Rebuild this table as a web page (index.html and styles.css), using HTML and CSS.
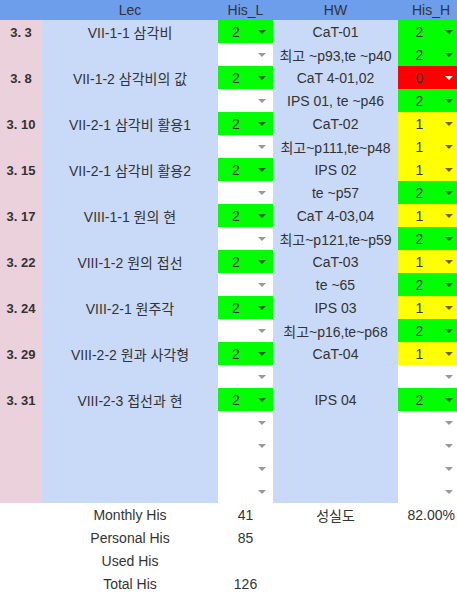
FILE: index.html
```html
<!DOCTYPE html>
<html lang="ko">
<head>
  <meta charset="UTF-8">
  <title>His 시트</title>
  <link rel="stylesheet" href="styles.css">
</head>
<body>
  <div class="sheet">
    <div class="row head">
      <div class="cell"></div>
      <div class="cell">Lec</div>
      <div class="cell">His_L</div>
      <div class="cell">HW</div>
      <div class="cell his-h-title">His_H</div>
    </div>

    <!-- 3.3 -->
    <div class="row">
      <div class="cell date">3. 3</div>
      <div class="cell lec">VII-1-1 삼각비</div>
      <div class="cell dd green"><span class="v">2</span><span class="arrow"></span></div>
      <div class="cell hw">CaT-01</div>
      <div class="cell dd hh green"><span class="v">2</span><span class="arrow"></span></div>
    </div>
    <div class="row">
      <div class="cell date"></div>
      <div class="cell lec"></div>
      <div class="cell dd"><span class="v"></span><span class="arrow"></span></div>
      <div class="cell hw">최고 ~p93,te ~p40</div>
      <div class="cell dd hh green"><span class="v">2</span><span class="arrow"></span></div>
    </div>

    <!-- 3.8 -->
    <div class="row">
      <div class="cell date">3. 8</div>
      <div class="cell lec">VII-1-2 삼각비의 값</div>
      <div class="cell dd green"><span class="v">2</span><span class="arrow"></span></div>
      <div class="cell hw">CaT 4-01,02</div>
      <div class="cell dd hh red"><span class="v">0</span><span class="arrow"></span></div>
    </div>
    <div class="row">
      <div class="cell date"></div>
      <div class="cell lec"></div>
      <div class="cell dd"><span class="v"></span><span class="arrow"></span></div>
      <div class="cell hw">IPS 01, te ~p46</div>
      <div class="cell dd hh green"><span class="v">2</span><span class="arrow"></span></div>
    </div>

    <!-- 3.10 -->
    <div class="row">
      <div class="cell date">3. 10</div>
      <div class="cell lec">VII-2-1 삼각비 활용1</div>
      <div class="cell dd green"><span class="v">2</span><span class="arrow"></span></div>
      <div class="cell hw">CaT-02</div>
      <div class="cell dd hh yellow"><span class="v">1</span><span class="arrow"></span></div>
    </div>
    <div class="row">
      <div class="cell date"></div>
      <div class="cell lec"></div>
      <div class="cell dd"><span class="v"></span><span class="arrow"></span></div>
      <div class="cell hw">최고~p111,te~p48</div>
      <div class="cell dd hh yellow"><span class="v">1</span><span class="arrow"></span></div>
    </div>

    <!-- 3.15 -->
    <div class="row">
      <div class="cell date">3. 15</div>
      <div class="cell lec">VII-2-1 삼각비 활용2</div>
      <div class="cell dd green"><span class="v">2</span><span class="arrow"></span></div>
      <div class="cell hw">IPS 02</div>
      <div class="cell dd hh yellow"><span class="v">1</span><span class="arrow"></span></div>
    </div>
    <div class="row">
      <div class="cell date"></div>
      <div class="cell lec"></div>
      <div class="cell dd"><span class="v"></span><span class="arrow"></span></div>
      <div class="cell hw">te ~p57</div>
      <div class="cell dd hh green"><span class="v">2</span><span class="arrow"></span></div>
    </div>

    <!-- 3.17 -->
    <div class="row">
      <div class="cell date">3. 17</div>
      <div class="cell lec">VIII-1-1 원의 현</div>
      <div class="cell dd green"><span class="v">2</span><span class="arrow"></span></div>
      <div class="cell hw">CaT 4-03,04</div>
      <div class="cell dd hh yellow"><span class="v">1</span><span class="arrow"></span></div>
    </div>
    <div class="row">
      <div class="cell date"></div>
      <div class="cell lec"></div>
      <div class="cell dd"><span class="v"></span><span class="arrow"></span></div>
      <div class="cell hw">최고~p121,te~p59</div>
      <div class="cell dd hh green"><span class="v">2</span><span class="arrow"></span></div>
    </div>

    <!-- 3.22 -->
    <div class="row">
      <div class="cell date">3. 22</div>
      <div class="cell lec">VIII-1-2 원의 접선</div>
      <div class="cell dd green"><span class="v">2</span><span class="arrow"></span></div>
      <div class="cell hw">CaT-03</div>
      <div class="cell dd hh yellow"><span class="v">1</span><span class="arrow"></span></div>
    </div>
    <div class="row">
      <div class="cell date"></div>
      <div class="cell lec"></div>
      <div class="cell dd"><span class="v"></span><span class="arrow"></span></div>
      <div class="cell hw">te ~65</div>
      <div class="cell dd hh green"><span class="v">2</span><span class="arrow"></span></div>
    </div>

    <!-- 3.24 -->
    <div class="row">
      <div class="cell date">3. 24</div>
      <div class="cell lec">VIII-2-1 원주각</div>
      <div class="cell dd green"><span class="v">2</span><span class="arrow"></span></div>
      <div class="cell hw">IPS 03</div>
      <div class="cell dd hh yellow"><span class="v">1</span><span class="arrow"></span></div>
    </div>
    <div class="row">
      <div class="cell date"></div>
      <div class="cell lec"></div>
      <div class="cell dd"><span class="v"></span><span class="arrow"></span></div>
      <div class="cell hw">최고~p16,te~p68</div>
      <div class="cell dd hh green"><span class="v">2</span><span class="arrow"></span></div>
    </div>

    <!-- 3.29 -->
    <div class="row">
      <div class="cell date">3. 29</div>
      <div class="cell lec">VIII-2-2 원과 사각형</div>
      <div class="cell dd green"><span class="v">2</span><span class="arrow"></span></div>
      <div class="cell hw">CaT-04</div>
      <div class="cell dd hh yellow"><span class="v">1</span><span class="arrow"></span></div>
    </div>
    <div class="row">
      <div class="cell date"></div>
      <div class="cell lec"></div>
      <div class="cell dd"><span class="v"></span><span class="arrow"></span></div>
      <div class="cell hw"></div>
      <div class="cell dd hh"><span class="v"></span><span class="arrow"></span></div>
    </div>

    <!-- 3.31 -->
    <div class="row">
      <div class="cell date">3. 31</div>
      <div class="cell lec">VIII-2-3 접선과 현</div>
      <div class="cell dd green"><span class="v">2</span><span class="arrow"></span></div>
      <div class="cell hw">IPS 04</div>
      <div class="cell dd hh green"><span class="v">2</span><span class="arrow"></span></div>
    </div>

    <!-- 빈 행 -->
    <div class="row">
      <div class="cell date"></div>
      <div class="cell lec"></div>
      <div class="cell dd"><span class="v"></span><span class="arrow"></span></div>
      <div class="cell hw"></div>
      <div class="cell dd hh"><span class="v"></span><span class="arrow"></span></div>
    </div>
    <div class="row">
      <div class="cell date"></div>
      <div class="cell lec"></div>
      <div class="cell dd"><span class="v"></span><span class="arrow"></span></div>
      <div class="cell hw"></div>
      <div class="cell dd hh"><span class="v"></span><span class="arrow"></span></div>
    </div>
    <div class="row">
      <div class="cell date"></div>
      <div class="cell lec"></div>
      <div class="cell dd"><span class="v"></span><span class="arrow"></span></div>
      <div class="cell hw"></div>
      <div class="cell dd hh"><span class="v"></span><span class="arrow"></span></div>
    </div>
    <div class="row">
      <div class="cell date"></div>
      <div class="cell lec"></div>
      <div class="cell dd"><span class="v"></span><span class="arrow"></span></div>
      <div class="cell hw"></div>
      <div class="cell dd hh"><span class="v"></span><span class="arrow"></span></div>
    </div>

    <!-- 요약 -->
    <div class="row sum">
      <div class="cell"></div>
      <div class="cell">Monthly His</div>
      <div class="cell">41</div>
      <div class="cell">성실도</div>
      <div class="cell pct">82.00%</div>
    </div>
    <div class="row sum">
      <div class="cell"></div>
      <div class="cell">Personal His</div>
      <div class="cell">85</div>
      <div class="cell"></div>
      <div class="cell"></div>
    </div>
    <div class="row sum">
      <div class="cell"></div>
      <div class="cell">Used His</div>
      <div class="cell"></div>
      <div class="cell"></div>
      <div class="cell"></div>
    </div>
    <div class="row sum">
      <div class="cell"></div>
      <div class="cell">Total His</div>
      <div class="cell">126</div>
      <div class="cell"></div>
      <div class="cell"></div>
    </div>
  </div>
</body>
</html>
```

FILE: styles.css
```css
body {
  margin: 0;
  background: #fff;
  font-family: 'Liberation Sans', Arial, 'Noto Sans CJK KR', sans-serif;
  font-size: 14px;
  color: #333;
}

.sheet {
  width: 457px;
  overflow: hidden;
}

.row {
  display: grid;
  grid-template-columns: 42px 176px 55px 125px 59px;
  height: 23px;
}

.cell {
  display: flex;
  align-items: center;
  justify-content: center;
  white-space: nowrap;
  overflow: hidden;
}

.head {
  height: 20px;
  background: #6d9eeb;
}

.head .his-h-title {
  padding-left: 7px;
}

.date {
  background: #ead1dc;
  font-weight: bold;
  font-size: 13px;
  padding-top: 1px;
}

.lec,
.hw {
  background: #c9daf8;
}

/* 드롭다운 셀 */
.dd .v {
  flex: 1;
  text-align: center;
}

.dd .arrow {
  width: 0;
  height: 0;
  border-left: 4px solid transparent;
  border-right: 4px solid transparent;
  border-top: 4px solid #999;
  margin-left: 4px;
  margin-right: 7px;
}

.dd.hh .arrow {
  margin-right: 4px;
}

.green {
  background: #00ff00;
}

.green .arrow {
  border-top-color: #006600;
}

.yellow {
  background: #ffff00;
}

.yellow .arrow {
  border-top-color: #666600;
}

.red {
  background: #ff0000;
}

.red .arrow {
  border-top-color: #fff;
}

.sum .pct {
  justify-content: flex-end;
  padding-right: 2px;
}
```
